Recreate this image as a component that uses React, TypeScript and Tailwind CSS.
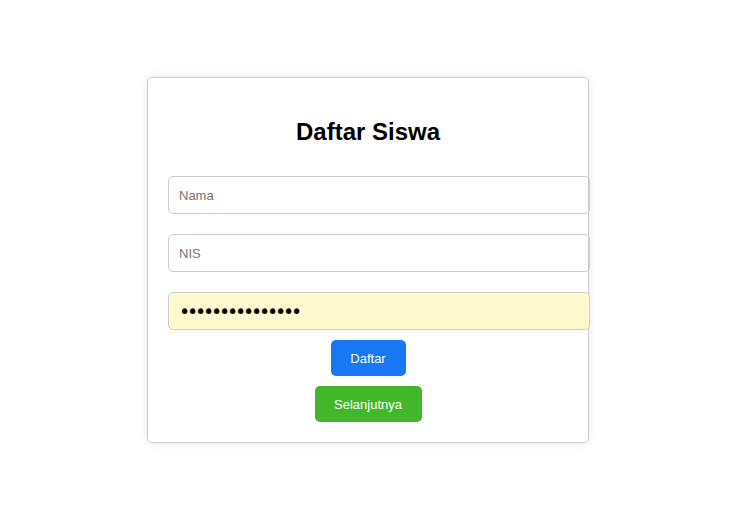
import React from "react"

const inputCls =
  "block w-[422px] h-[38px] box-border px-[10px] border border-[#cccccc] rounded-[5px] text-black placeholder:text-[#757575] outline-none"

export default function App() {
  return (
    <div className="min-h-screen w-full flex items-center justify-center pr-[15px] bg-white font-['Liberation_Sans',Arial,sans-serif]">
      <div className="w-[442px] box-border border border-[#cccccc] rounded-[5px] bg-white p-[20px] shadow-[0_0_10px_rgba(0,0,0,0.1)] flex flex-col">
        <h2 className="mt-[20px] mb-[20px] text-center text-[24px] leading-[28px] font-bold text-black">
          Daftar Siswa
        </h2>
        <div className="flex flex-col gap-[20px] mt-[10px]">
          <input type="text" placeholder="Nama" className={inputCls + " text-[13px] pt-[2px]"} />
          <input type="text" placeholder="NIS" className={inputCls + " text-[13px] pt-[2px]"} />
          <input
            type="password"
            defaultValue="password1234567"
            className={inputCls + " bg-[#fffacd] text-[19px] tracking-[-3.2px] font-['DejaVu_Sans',sans-serif]"}
          />
        </div>
        <div className="flex flex-col items-center gap-[10px] mt-[10px]">
          <button className="h-[36px] w-[75px] rounded-[5px] bg-[#1877f2] text-white text-[13px] pt-[2px]">
            Daftar
          </button>
          <button className="h-[36px] w-[107px] rounded-[5px] bg-[#42b72a] text-white text-[13px] pt-[2px]">
            Selanjutnya
          </button>
        </div>
      </div>
    </div>
  )
}
